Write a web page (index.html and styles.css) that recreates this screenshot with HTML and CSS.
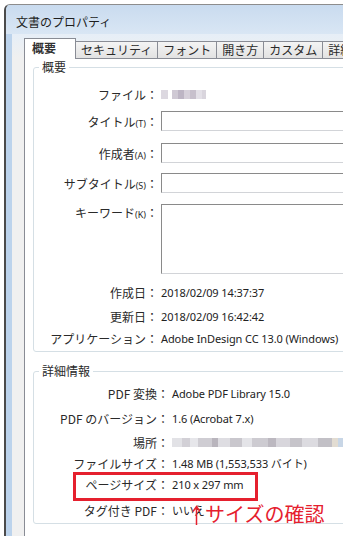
FILE: index.html
```html
<!DOCTYPE html>
<html lang="ja">
<head>
  <meta charset="UTF-8">
  <title>文書のプロパティ</title>
  <link rel="stylesheet" href="styles.css">
</head>
<body>
<div class="window">
  <div class="title-bar">文書のプロパティ</div>
  <div class="frame">
    <div class="client">
      <div class="tabs">
        <div class="tab active">概要</div>
        <div class="tab">セキュリティ</div>
        <div class="tab">フォント</div>
        <div class="tab">開き方</div>
        <div class="tab">カスタム</div>
        <div class="tab">詳細</div>
      </div>

      <div class="panel">
        <fieldset class="group group-summary">
          <legend>概要</legend>
          <div class="row row-file">
            <span class="label">ファイル：</span>
            <span class="blur blur-file"></span>
          </div>
          <div class="row row-title">
            <span class="label">タイトル<small>(T)</small>：</span>
            <span class="field"></span>
          </div>
          <div class="row row-author">
            <span class="label">作成者<small>(A)</small>：</span>
            <span class="field"></span>
          </div>
          <div class="row row-subtitle">
            <span class="label">サブタイトル<small>(S)</small>：</span>
            <span class="field"></span>
          </div>
          <div class="row row-keywords">
            <span class="label">キーワード<small>(K)</small>：</span>
            <span class="field field-area"></span>
          </div>
          <div class="row row-created">
            <span class="label">作成日：</span>
            <span class="value">2018/02/09 14:37:37</span>
          </div>
          <div class="row row-modified">
            <span class="label">更新日：</span>
            <span class="value">2018/02/09 16:42:42</span>
          </div>
          <div class="row row-app">
            <span class="label">アプリケーション：</span>
            <span class="value">Adobe InDesign CC 13.0 (Windows)</span>
          </div>
        </fieldset>

        <fieldset class="group group-detail">
          <legend>詳細情報</legend>
          <div class="row row-producer">
            <span class="label">PDF 変換：</span>
            <span class="value">Adobe PDF Library 15.0</span>
          </div>
          <div class="row row-version">
            <span class="label">PDF のバージョン：</span>
            <span class="value">1.6 (Acrobat 7.x)</span>
          </div>
          <div class="row row-location">
            <span class="label">場所：</span>
            <span class="blur blur-location"></span>
          </div>
          <div class="row row-size">
            <span class="label">ファイルサイズ：</span>
            <span class="value">1.48 MB (1,553,533 バイト)</span>
          </div>
          <div class="row row-page">
            <span class="label">ページサイズ：</span>
            <span class="value">210 x 297 mm</span>
            <span class="mark-box"></span>
          </div>
          <div class="row row-tagged">
            <span class="label">タグ付き PDF：</span>
            <span class="value">いいえ</span>
            <span class="note">
              <svg width="9" height="20" viewBox="0 0 9 20"><path d="M4.5 1.5V20M1 6.5L4.5 1.5L8 6.5" fill="none" stroke="#e5202e" stroke-width="1.5"/></svg>
              サイズの確認
            </span>
          </div>
        </fieldset>
      </div>
    </div>
  </div>
</div>
</body>
</html>
```

FILE: styles.css
```css
body {
  margin: 0;
  background: #fff;
  font-family: "Noto Sans CJK JP", sans-serif;
  font-size: 12px;
  color: #2a2a2a;
}

.window {
  margin: 4px 0 0 4px;
  width: 337px;
  height: 531px;
  border-left: 2px solid #4b4b4b;
  border-top: 1px solid #8d8d8d;
  border-top-left-radius: 6px;
  overflow: hidden;
  background: #bcd3ec;
  display: flex;
  flex-direction: column;
}

.title-bar {
  height: 22px;
  padding: 7px 0 0 10px;
  line-height: 20px;
  color: #1e1e1e;
  background: linear-gradient(#c9dbef, #d9e6f4);
  flex-shrink: 0;
}

.frame {
  flex: 1;
  width: 450px;
  padding-left: 6px;
  display: flex;
}

.client {
  flex: 1;
  display: flex;
  flex-direction: column;
  padding: 4px 0 0 12px;
  background: linear-gradient(#e6eef7, #f0f0f0 24px);
}

.tabs {
  display: flex;
  align-items: flex-end;
  height: 20px;
}

.tab {
  height: 16px;
  line-height: 16px;
  padding: 0 5px;
  margin-left: -1px;
  border: 1px solid #898c95;
  border-bottom: none;
  background: linear-gradient(#f4f4f4, #e2e2e2);
  white-space: nowrap;
}

.tab.active {
  position: relative;
  z-index: 1;
  height: 20px;
  line-height: 17px;
  margin-left: 0;
  margin-bottom: -1px;
  padding: 0 19px 0 7px;
  background: #fff;
  font-weight: bold;
  color: #333;
}

.panel {
  flex: 1;
  background: #fff;
  border-top: 1px solid #898c95;
  border-left: 1px solid #898c95;
  padding-left: 8px;
}

.group {
  margin: 0 8px 0 0;
  padding: 0 0 3px 0;
  border: 1px solid #d5dfe5;
  border-radius: 3px;
  min-width: 0;
}

.group legend {
  margin-left: 5px;
  padding: 0 3px;
  line-height: 16px;
}

.group-detail {
  margin-top: 11px;
}

.row {
  position: relative;
  display: flex;
  align-items: center;
  height: 20px;
}

.label {
  width: 124px;
  margin-right: 3px;
  flex-shrink: 0;
  text-align: right;
  white-space: nowrap;
}

.label small {
  font-family: "Noto Sans", sans-serif;
  font-size: 9px;
}

.group-detail .label {
  width: 135px;
}

.value {
  font-family: "Noto Sans", "Noto Sans CJK JP", sans-serif;
  font-size: 11px;
  letter-spacing: -0.1px;
  color: #222;
  white-space: nowrap;
}

.field {
  flex: 1;
  height: 18px;
  margin-right: 8px;
  background: #fff;
  border: 1px solid #d2d4d8;
  border-top-color: #8a8a8a;
  border-left-color: #8a8a8a;
}

.field-area {
  height: 68px;
}

.row-keywords {
  height: auto;
  align-items: flex-start;
}

.row-file { margin-top: 9px; }
.row-title { margin-top: 7px; }
.row-author { margin-top: 12px; }
.row-subtitle { margin-top: 10px; }
.row-keywords { margin-top: 11px; }
.row-created { margin-top: 8px; }
.row-modified { margin-top: 4px; }
.row-app { margin-top: 2px; }

.row-producer { margin-top: 4px; }
.row-version { margin-top: 5px; }
.row-location { margin-top: 4px; }
.row-size { margin-top: 1px; }
.row-page { margin-top: 1px; }
.row-tagged { margin-top: 6px; }

.blur {
  display: inline-block;
  height: 9px;
}

.blur-file {
  width: 45px;
  background: linear-gradient(90deg,
    #dcd8e0 0 7px, #fff 7px 11px, #cfc9d4 11px 17px, #bdb5c4 17px 23px,
    #d6d0da 23px 29px, #c7c0cc 29px 35px, #e3e0e7 35px 41px, #d9d5dd 41px 45px);
}

.blur-location {
  width: 200px;
  background: linear-gradient(90deg,
    #e2e2e6 0 10px, #d2d0d6 10px 18px, #e6e6ea 18px 26px, #cfcdd3 26px 40px,
    #b9b5bd 40px 46px, #dedde2 46px 58px, #c9c7cd 58px 70px, #e4e4e8 70px 80px,
    #cdcbd1 80px 96px, #bcb8c0 96px 104px, #d8d6dc 104px 118px, #c6c4ca 118px 130px,
    #dcdbe0 130px 146px, #c2c0c6 146px 160px, #e2dcd2 160px 166px, #c8d6e6 166px 172px,
    #dcdce0 172px 200px);
}

.mark-box {
  position: absolute;
  left: 39px;
  top: -2px;
  width: 185px;
  height: 29px;
  box-sizing: border-box;
  border: 3px solid #e5202e;
}

.note {
  position: absolute;
  left: 158px;
  top: 3px;
  display: flex;
  align-items: flex-end;
  gap: 4px;
  color: #e5202e;
  font-size: 20px;
  line-height: 22px;
  white-space: nowrap;
}
```
